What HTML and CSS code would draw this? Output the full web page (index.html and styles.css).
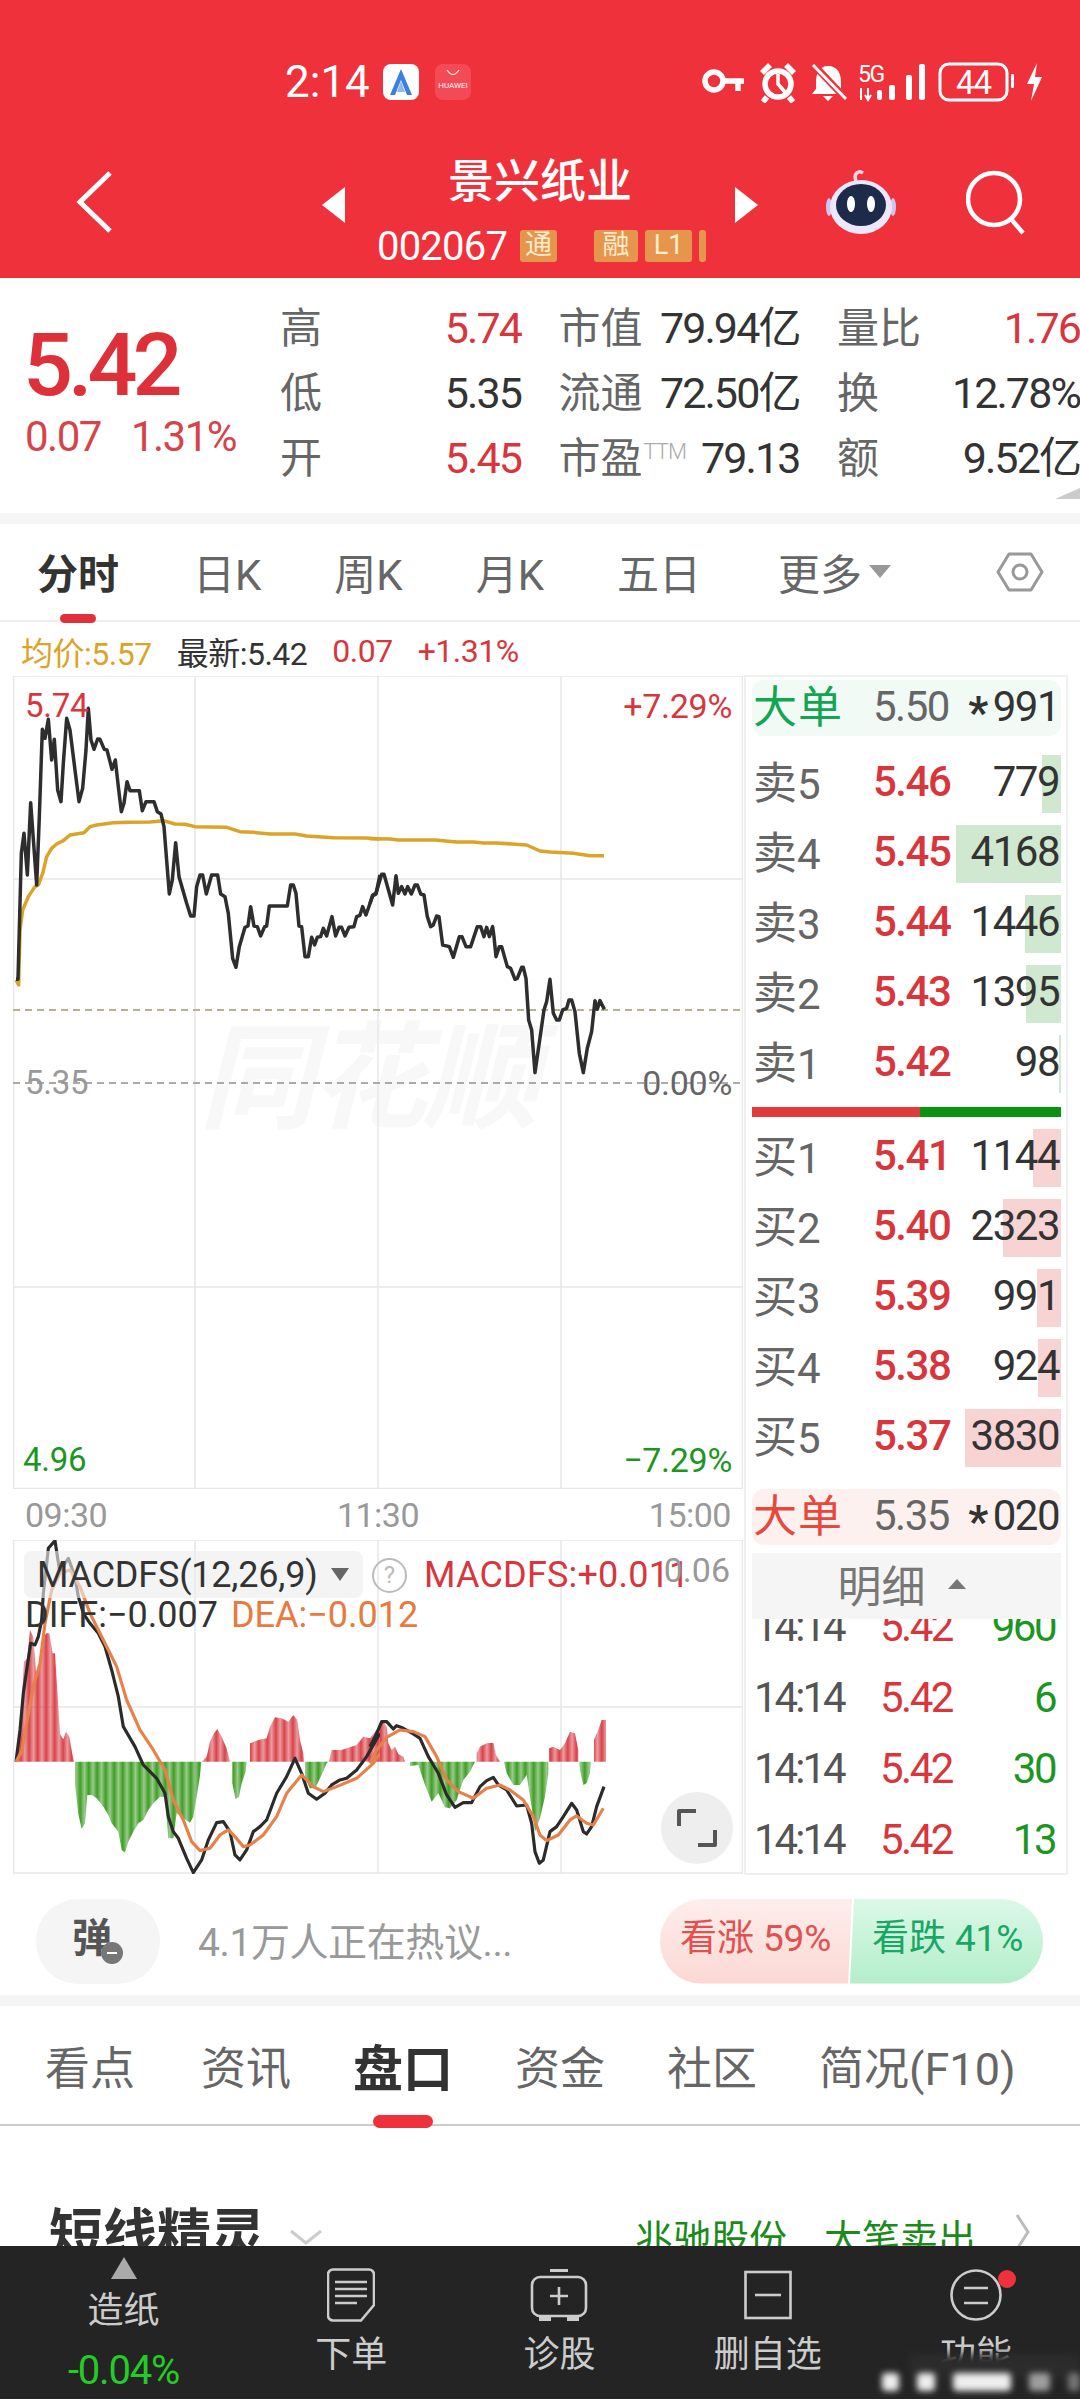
FILE: index.html
```html
<!doctype html>
<html lang="zh">
<head>
<meta charset="utf-8" />
<title>景兴纸业 002067</title>
<link rel="stylesheet" href="styles.css">
</head>
<body>
<div id="page">

<!-- Kopf -->
<header class="top">
  <div class="status">
    <span class="clock">2:14</span>
    <span class="app app-a"><svg width="36" height="36" viewBox="0 0 36 36"><path d="M18 5 L29 31 H24 L18 16 L12 31 H7Z" fill="#3d7fe0"/><path d="M18 17 L22 28 H14Z" fill="#8fb9f2"/></svg></span>
    <span class="app app-h"><svg width="36" height="12" viewBox="0 0 36 12"><path d="M12 1 Q18 10 24 1" fill="none" stroke="#fff" stroke-width="1.2"/></svg><b>HUAWEI</b></span>
    <svg class="sys" width="345" height="42" viewBox="700 58 345 42" fill="#fff" stroke="none">
      <g fill="none" stroke="#fff" stroke-width="5.5">
        <circle cx="714" cy="78" r="9"/><path d="M723 78 H744 M738 78 V88"/>
        <circle cx="778" cy="81" r="13"/><path d="M762 70 L770 62 M794 70 L786 62 M767 94 L763 99 M789 94 L793 99"/>
      </g>
      <path d="M778 71 V81 L785 89" fill="none" stroke="#fff" stroke-width="3.5"/>
      <path d="M828 63 c-9 0 -12 8 -12 16 v7 l-4 5 h33 l-4 -5 v-7 c0 -8 -3 -16 -13 -16z M823 93 h10 l-5 5z"/>
      <path d="M812 60 L848 98" stroke="#ef313b" stroke-width="7"/>
      <path d="M813 62 L846 96" stroke="#fff" stroke-width="3"/>
      <text x="858" y="79" font-size="23" letter-spacing="-1.5">5G</text>
      <path d="M861 85 V97 M868 85 V96 M865 92 L868 97 L871 92" fill="none" stroke="#fff" stroke-width="2"/>
      <rect x="877" y="87" width="5" height="10" rx="2"/><rect x="889" y="82" width="6" height="15" rx="2"/>
      <rect x="906" y="72" width="6" height="25" rx="2"/><rect x="919" y="61" width="6" height="36" rx="2"/>
      <rect x="940" y="61" width="67" height="36" rx="9" fill="none" stroke="#fff" stroke-width="3"/>
      <text x="973.5" y="91" font-size="33" text-anchor="middle" letter-spacing="-1">44</text>
      <rect x="1011" y="71" width="3" height="14" rx="1"/>
      <path d="M1037 60 L1027 81 H1034 L1031 98 L1042 74 H1035Z"/>
    </svg>
  </div>
  <nav class="bar">
    <svg class="back" width="37" height="62" viewBox="0 0 37 62"><path d="M34 2 L4 31 L34 60" fill="none" stroke="#fff" stroke-width="5"/></svg>
    <i class="tri-l"></i>
    <div class="name">
      <h1>景兴纸业</h1>
      <p class="code"><span>002067</span><b class="tag tag-tong">通</b><b class="tag tag-rong">融</b><b class="tag tag-l1">L1</b><b class="tag tag-cut"></b></p>
    </div>
    <i class="tri-r"></i>
    <svg class="robot" width="72" height="66" viewBox="0 0 72 66">
      <path d="M31 12 C28 4 34 1 38 4" fill="none" stroke="#efd5e4" stroke-width="3.5"/>
      <ellipse cx="4" cy="38" rx="3" ry="9" fill="#cfc6ee"/><ellipse cx="68" cy="38" rx="3" ry="9" fill="#cfc6ee"/>
      <ellipse cx="36" cy="38" rx="31" ry="27" fill="#ece8fb"/>
      <ellipse cx="36" cy="36" rx="25" ry="21" fill="#1d2a49"/>
      <ellipse cx="26" cy="35" rx="4" ry="8" fill="#fff"/><ellipse cx="46" cy="35" rx="4" ry="8" fill="#fff"/>
    </svg>
    <svg class="search" width="62" height="66" viewBox="0 0 62 66"><circle cx="28" cy="30" r="26" fill="none" stroke="#fff" stroke-width="4.5"/><path d="M45 50 L57 64" stroke="#fff" stroke-width="4.5"/></svg>
  </nav>
</header>

<!-- Kurs -->
<section class="quote">
  <div class="price">
    <div class="last">5.42</div>
    <div class="chg"><span>0.07</span><span>1.31%</span></div>
  </div>
  <div class="stats">
    <div class="cell"><label>高</label><b class="red">5.74</b></div>
    <div class="cell"><label>市值</label><b>79.94亿</b></div>
    <div class="cell"><label>量比</label><b class="red">1.76</b></div>
    <div class="cell"><label>低</label><b>5.35</b></div>
    <div class="cell"><label>流通</label><b>72.50亿</b></div>
    <div class="cell"><label>换</label><b>12.78%</b></div>
    <div class="cell"><label>开</label><b class="red">5.45</b></div>
    <div class="cell"><label>市盈<sup>TTM</sup></label><b>79.13</b></div>
    <div class="cell"><label>额</label><b>9.52亿</b></div>
  </div>
  <i class="corner"></i>
</section>
<div class="strip"></div>

<div class="tabs">
  <span class="on">分时</span><span>日K</span><span>周K</span><span>月K</span><span>五日</span><span class="more">更多<i></i></span>
  <svg class="hex" width="48" height="48" viewBox="0 0 48 48"><path d="M13 6 H35 L46 24 L35 42 H13 L2 24Z" fill="none" stroke="#999" stroke-width="3" stroke-linejoin="round"/><circle cx="24" cy="24" r="7" fill="none" stroke="#999" stroke-width="3"/></svg>
</div>

<div class="legend">
  <span class="gold">均价:5.57</span><span>最新:5.42</span><span class="red">0.07</span><span class="red">+1.31%</span>
</div>

<!-- Charts + Orderbuch -->
<div class="market">
  <div class="charts">
    <div class="chart">
      <span class="mark">同花顺</span>
      <svg width="730" height="813" viewBox="13 676 730 813" fill="none" stroke-linejoin="round">
        <path d="M13 676 H743 M13 879 H743 M13 1287 H743 M13 1488.5 H743 M13.5 676 V1489 M195 676 V1489 M378 676 V1489 M561 676 V1489 M742.5 676 V1489" stroke="#e8e8e8" stroke-width="1.6"/>
        <path d="M13 1010 H743" stroke="#b8b194" stroke-width="2" stroke-dasharray="7 5"/>
        <path d="M13 1083 H743" stroke="#aaa" stroke-width="2" stroke-dasharray="7 5"/>
        <g transform="translate(10 690) scale(.3333)" stroke-width="10.5">
          <path stroke="#dba328" d="M18 870 L26 885 L30 720 L38 660 L55 620 L75 590 L85 585 L98 550 L110 500 L125 475 L140 462 L160 452 L180 435 L222 428 L240 410 L260 405 L310 398 L350 397 L420 396 L460 392 L495 402 L525 403 L555 410 L650 412 L690 425 L730 427 L780 432 L855 432 L890 438 L970 443 L1070 444 L1110 447"/>
          <path stroke="#2e2e2e" d="M18 868 L24 868 L34 490 L42 430 L52 555 L62 338 L80 585 L88 380 L97 118 L105 145 L115 88 L125 210 L133 148 L143 300 L153 335 L160 220 L170 85 L180 120 L195 240 L207 335 L218 295 L228 180 L235 55 L243 150 L252 178 L263 147 L270 148 L283 178 L291 180 L306 238 L316 210 L325 290 L334 365 L342 340 L351 275 L360 302 L388 302 L397 362 L408 335 L432 335 L442 365 L453 372 L462 410 L478 612 L487 570 L497 458 L507 560 L530 640 L542 678 L552 678 L560 590 L570 555 L578 555 L589 612 L605 555 L623 555 L632 612 L645 620 L655 670 L668 805 L678 832 L688 770 L705 712 L714 708 L722 650 L732 708 L742 710 L752 738 L764 710 L770 708 L778 648 L832 648 L842 585 L850 585 L858 610 L867 708 L875 710 L885 800 L895 800 L905 742 L914 765 L922 742 L932 740 L940 715 L950 738 L966 680 L977 738 L987 712 L995 712 L1005 738 L1017 712 L1032 710 L1040 680 L1050 676 L1058 650 L1068 675 L1088 618 L1098 612 L1110 555"/>
        </g>
        <g transform="translate(370 690) scale(.3333)" stroke-width="10.5">
          <path stroke="#dba328" d="M0 446 L60 447 L85 450 L195 450 L260 456 L310 456 L340 459 L380 459 L470 465 L510 483 L540 486 L610 490 L660 497 L702 497"/>
          <path stroke="#2e2e2e" d="M0 640 L8 615 L18 610 L35 553 L42 553 L68 645 L78 557 L85 610 L95 590 L105 612 L113 590 L124 612 L135 585 L142 585 L152 612 L162 615 L172 680 L182 710 L190 705 L200 678 L207 680 L218 765 L238 770 L250 802 L268 740 L276 740 L288 770 L302 770 L322 710 L332 710 L342 740 L350 712 L358 740 L368 710 L372 740 L378 800 L388 770 L395 770 L412 830 L422 835 L435 868 L442 865 L455 832 L460 832 L468 865 L476 990 L485 1020 L495 1148 L522 960 L530 935 L540 868 L550 970 L560 990 L568 990 L578 960 L590 955 L597 930 L605 930 L615 965 L628 1090 L640 1148 L652 1075 L665 1025 L675 932 L682 958 L690 932 L703 958"/>
        </g>
      </svg>
      <span class="lb lb-hi red">5.74</span>
      <span class="lb lb-pct red">+7.29%</span>
      <span class="lb lb-pre">5.35</span>
      <span class="lb lb-zero">0.00%</span>
      <span class="lb lb-lo green">4.96</span>
      <span class="lb lb-neg green">−7.29%</span>
    </div>
    <div class="axis"><span>09:30</span><span>11:30</span><span>15:00</span></div>
    <div class="macd">
      <svg width="730" height="334" viewBox="13 1540 730 334" fill="none" stroke-linejoin="round">
        <defs>
          <pattern id="barR" width="3.4" height="6" patternUnits="userSpaceOnUse"><rect width="2.6" height="6" fill="#d9434a"/></pattern>
          <pattern id="barG" width="3.4" height="6" patternUnits="userSpaceOnUse"><rect width="2.6" height="6" fill="#3f9e25"/></pattern>
        </defs>
        <path d="M13 1540 H743 M13 1707 H743 M13 1873 H743 M13.5 1540 V1874 M195 1540 V1874 M378 1540 V1874 M561 1540 V1874 M742.5 1540 V1874" stroke="#e8e8e8" stroke-width="1.6"/>
        <g transform="translate(10 1530) scale(.3333)">
          <path fill="url(#barR)" d="M18 695 L25 670 L35 520 L42 395 L52 385 L60 300 L70 320 L78 425 L88 410 L98 330 L108 310 L118 310 L128 370 L135 370 L143 497 L150 612 L160 628 L168 605 L178 620 L187 672 L192 695Z M575 695 L590 680 L600 635 L612 610 L622 597 L635 620 L650 655 L660 695Z M720 695 L720 640 L745 630 L770 625 L780 590 L795 562 L815 565 L835 575 L850 555 L862 570 L870 630 L880 670 L882 695Z M957 695 L965 660 L995 660 L1040 645 L1060 620 L1080 625 L1100 600 L1110 590 L1110 695Z"/>
          <path fill="url(#barG)" d="M195 695 L195 762 L205 852 L215 897 L225 880 L232 795 L245 795 L260 805 L280 830 L295 855 L305 880 L325 905 L335 960 L345 968 L355 935 L370 905 L385 880 L400 870 L415 840 L430 820 L450 800 L465 800 L475 925 L490 925 L500 850 L520 865 L540 878 L550 860 L560 800 L570 738 L574 695Z M667 695 L667 760 L677 808 L687 800 L695 760 L707 725 L710 695Z M885 695 L885 745 L900 775 L915 775 L925 755 L935 735 L950 700 L955 695Z"/>
          <path stroke="#2b2b2b" stroke-width="9.5" d="M18 695 L30 600 L40 490 L50 420 L62 340 L75 345 L85 320 L95 270 L100 190 L108 120 L115 55 L135 32 L150 130 L165 100 L175 85 L195 140 L205 200 L220 250 L240 280 L265 310 L285 350 L305 420 L325 500 L340 590 L375 650 L400 705 L440 745 L465 790 L475 860 L490 905 L505 925 L530 985 L550 1028 L575 990 L595 930 L620 878 L640 875 L660 905 L675 975 L690 990 L710 960 L730 905 L750 890 L770 870 L800 790 L830 740 L855 685 L875 730 L895 790 L920 808 L945 790 L965 765 L990 750 L1010 745 L1040 720 L1070 680 L1110 610"/>
          <path stroke="#e8804a" stroke-width="9.5" d="M18 695 L35 665 L50 580 L70 470 L90 400 L105 280 L125 180 L150 130 L180 120 L210 170 L240 250 L280 330 L320 410 L350 510 L390 600 L430 660 L465 720 L490 810 L520 870 L545 935 L570 962 L600 955 L630 915 L655 900 L675 920 L700 950 L720 945 L760 915 L800 860 L830 790 L875 735 L910 770 L940 785 L980 770 L1040 745 L1090 700 L1110 670"/>
        </g>
        <g transform="translate(370 1530) scale(.3333)">
          <path fill="url(#barR)" d="M30 695 L30 585 L40 575 L50 590 L55 640 L65 660 L75 650 L85 672 L100 680 L105 695Z M320 695 L320 670 L330 650 L350 640 L370 638 L378 675 L390 695Z M537 695 L537 655 L550 650 L570 660 L585 640 L600 605 L615 610 L625 660 L625 695Z M672 695 L672 630 L685 600 L695 570 L708 570 L708 695Z"/>
          <path fill="url(#barG)" d="M120 695 L120 708 L145 705 L165 765 L185 815 L205 790 L225 832 L240 835 L260 810 L280 750 L300 725 L315 695Z M402 695 L410 730 L430 765 L450 765 L470 735 L480 800 L490 865 L495 905 L510 865 L525 800 L535 730 L535 695Z M628 695 L630 720 L640 765 L650 760 L660 730 L662 695Z"/>
          <path stroke="#2b2b2b" stroke-width="9.5" d="M0 650 L20 610 L35 575 L50 575 L70 597 L80 587 L100 595 L130 612 L150 625 L175 680 L205 730 L230 795 L255 832 L280 818 L305 818 L330 770 L350 752 L370 742 L385 765 L410 780 L440 828 L470 825 L485 880 L495 965 L508 1000 L520 990 L540 905 L560 890 L580 860 L605 820 L620 840 L640 905 L650 912 L665 890 L680 830 L702 770"/>
          <path stroke="#e8804a" stroke-width="9.5" d="M0 700 L20 660 L50 622 L90 600 L130 605 L165 620 L200 680 L230 750 L265 785 L310 805 L350 775 L390 765 L420 780 L460 810 L490 860 L510 915 L530 932 L565 915 L600 870 L620 858 L650 880 L670 885 L700 835"/>
        </g>
        <circle cx="697" cy="1828" r="36" fill="#eee"/>
        <path d="M679 1826 V1811 H696 M698 1845 H715 V1830" stroke="#555" stroke-width="4"/>
      </svg>
      <div class="pick"><span>MACDFS(12,26,9)</span><i></i></div>
      <span class="help">?</span>
      <span class="mv red">MACDFS:+0.011</span>
      <span class="mtop">0.06</span>
      <div class="mline"><span>DIFF:−0.007</span><span class="dea">DEA:−0.012</span></div>
    </div>
  </div>

  <aside class="book">
    <div class="big big-g"><em>大单</em><b>5.50</b><span><i class="star">*</i>991</span></div>
    <div class="rows">
      <div class="row"><label>卖<u>5</u></label><b>5.46</b><span>779</span><i class="ask" style="width:19px"></i></div>
      <div class="row"><label>卖<u>4</u></label><b>5.45</b><span>4168</span><i class="ask" style="width:105px"></i></div>
      <div class="row"><label>卖<u>3</u></label><b>5.44</b><span>1446</span><i class="ask" style="width:36px"></i></div>
      <div class="row"><label>卖<u>2</u></label><b>5.43</b><span>1395</span><i class="ask" style="width:35px"></i></div>
      <div class="row"><label>卖<u>1</u></label><b>5.42</b><span>98</span><i class="ask" style="width:2px"></i></div>
    </div>
    <div class="spread"><i></i></div>
    <div class="rows rows-buy">
      <div class="row"><label>买<u>1</u></label><b>5.41</b><span>1144</span><i class="bid" style="width:28px"></i></div>
      <div class="row"><label>买<u>2</u></label><b>5.40</b><span>2323</span><i class="bid" style="width:58px"></i></div>
      <div class="row"><label>买<u>3</u></label><b>5.39</b><span>991</span><i class="bid" style="width:24px"></i></div>
      <div class="row"><label>买<u>4</u></label><b>5.38</b><span>924</span><i class="bid" style="width:23px"></i></div>
      <div class="row"><label>买<u>5</u></label><b>5.37</b><span>3830</span><i class="bid" style="width:96px"></i></div>
    </div>
    <div class="big big-r"><em>大单</em><b>5.35</b><span><i class="star">*</i>020</span></div>
    <div class="detail">明细<i></i></div>
    <div class="ticks">
      <div class="tick"><span>14:14</span><b>5.42</b><em>960</em></div>
      <div class="tick"><span>14:14</span><b>5.42</b><em>6</em></div>
      <div class="tick"><span>14:14</span><b>5.42</b><em>30</em></div>
      <div class="tick"><span>14:14</span><b>5.42</b><em>13</em></div>
    </div>
  </aside>
</div>

<!-- Kommentar -->
<div class="talk">
  <div class="danmu"><b>弹</b><i></i></div>
  <span class="hot">4.1万人正在热议...</span>
  <div class="vote"><span class="up">看涨 59%</span><span class="down">看跌 41%</span></div>
</div>
<div class="strip"></div>

<div class="subtabs">
  <span>看点</span><span>资讯</span><span class="on">盘口</span><span>资金</span><span>社区</span><span>简况(F10)</span>
</div>

<div class="spirit">
  <h2>短线精灵</h2>
  <svg class="chev" width="34" height="16" viewBox="0 0 34 16"><path d="M2 2 L17 14 L32 2" fill="none" stroke="#ccc" stroke-width="3"/></svg>
  <span class="s-stock">兆驰股份</span><span class="s-act">大笔卖出</span>
  <svg class="chev-r" width="16" height="36" viewBox="0 0 16 36"><path d="M2 1 L13 18 L2 35" fill="none" stroke="#bbb" stroke-width="3"/></svg>
</div>

<!-- Fussleiste -->
<footer class="dock">
  <div class="dock-first"><i></i><span>造纸</span><b>-0.04%</b></div>
  <div class="dock-item">
    <svg width="48" height="54" viewBox="0 0 48 54" fill="none" stroke="#ccc" stroke-width="2.6"><path d="M6 1.5 H42 a5 5 0 0 1 5 5 V37 L34 52.5 H6 a5 5 0 0 1 -5 -5 V6.5 a5 5 0 0 1 5 -5Z"/><path d="M8 14 H40 M8 21 H40 M8 28 H40 M8 35 H30"/></svg>
    <span>下单</span>
  </div>
  <div class="dock-item">
    <svg width="58" height="54" viewBox="0 0 58 54" fill="none" stroke="#ccc" stroke-width="2.6"><path d="M20 2.5 H38" stroke-width="3"/><rect x="2" y="9" width="54" height="39" rx="8"/><path d="M29 19 V37 M20 28 H38"/><path d="M9 51 H21 M37 51 H49" stroke-width="4"/></svg>
    <span>诊股</span>
  </div>
  <div class="dock-item">
    <svg width="48" height="54" viewBox="0 0 48 54" fill="none" stroke="#ccc" stroke-width="2.6"><rect x="1.5" y="4" width="45" height="46"/><path d="M11 27 H37"/></svg>
    <span>删自选</span>
  </div>
  <div class="dock-item">
    <svg width="52" height="54" viewBox="0 0 52 54" fill="none" stroke="#ccc" stroke-width="2.6"><circle cx="26" cy="27" r="24.5"/><path d="M14 20 H38 M14 35 H38"/></svg>
    <span>功能</span>
    <i class="dot"></i>
  </div>
  <div class="smear"><i></i><i></i><i></i><i></i><i></i></div>
</footer>

</div>
</body>
</html>
```

FILE: styles.css
```css
* { box-sizing: border-box; }
html, body { margin: 0; padding: 0; background: #fff; }
body { font-family: Roboto, "Noto Sans CJK SC", sans-serif; color: #333; }
#page { position: relative; width: 1080px; height: 2400px; overflow: hidden; }
h1, h2, p { margin: 0; font-weight: 400; }
i, em { font-style: normal; }
u { text-decoration: none; }
label { font-weight: 400; }

.red { color: #d8363c; }
.green { color: #1b961f; }
.gold { color: #dba328; }

/* Kopf */
.top { height: 278px; background: #ef313b; color: #fff; padding-top: 61px; }
.status { display: flex; align-items: center; height: 42px; padding-left: 285px; }
.clock { font-size: 44px; width: 98px; line-height: 42px; }
.app { display: flex; flex-direction: column; align-items: center; width: 36px; height: 36px; border-radius: 8px; }
.app-a { background: #fff; }
.app-h { margin-left: 16px; background: #f34a55; padding-top: 5px; }
.app-h b { font-size: 8px; font-weight: 400; line-height: 10px; }
.sys { margin-left: 229px; font-family: Roboto, sans-serif; }

.bar { display: flex; align-items: center; height: 175px; padding: 0 0 0 76px; }
.back { margin-top: 22px; }
.tri-l, .tri-r { width: 0; height: 0; border-top: 18px solid transparent; border-bottom: 18px solid transparent; margin-top: 28px; }
.tri-l { margin-left: 209px; border-right: 23px solid #fff; }
.tri-r { border-left: 23px solid #fff; }
.name { width: 390px; display: flex; flex-direction: column; align-items: center; padding-top: 36px; }
.name h1 { font-size: 46px; line-height: 60px; font-weight: 500; }
.code { display: flex; align-items: center; height: 40px; margin-top: 15px; margin-left: 4px; font-size: 40px; width: 330px; }
.code span { width: 143px; letter-spacing: -.8px; }
.tag { display: block; height: 32px; line-height: 31px; text-align: center; font-size: 27px; font-weight: 400; background: #e6964c; color: #ffeccd; border-radius: 3px; }
.tag-tong { width: 37px; }
.tag-rong { width: 44px; margin-left: 37px; }
.tag-l1 { width: 47px; margin-left: 7px; }
.tag-cut { width: 7px; margin-left: 7px; }
.robot { margin-left: 67px; margin-top: 22px; }
.search { margin-left: 69px; margin-top: 22px; }

/* Kurs */
.quote { position: relative; display: flex; height: 235px; }
.price { width: 281px; padding: 40px 0 0 23px; color: #de3038; }
.last { font-size: 88px; line-height: 94px; font-weight: 500; letter-spacing: -5px; }
.chg { display: flex; gap: 30px; margin-left: 2px; font-size: 42px; line-height: 50px; letter-spacing: -1.5px; color: #d5444b; }
.stats { display: grid; grid-template-columns: 240px 240px 242px; column-gap: 38.5px; grid-auto-rows: 65px; padding-top: 17px; }
.cell { display: flex; justify-content: space-between; align-items: center; font-size: 43px; letter-spacing: -1.9px; }
.cell label { color: #666; letter-spacing: 0; font-size: 42px; margin: -6px 0 0 -1px; }
.cell b { font-weight: 400; line-height: 50px; color: #333; }
.cell b.red { color: #d8363c; }
.cell sup { font-size: 22px; line-height: 0; vertical-align: 14px; color: #aaa; font-weight: 300; letter-spacing: -1px; margin-left: 1px; }
.corner { position: absolute; right: 0; top: 210px; width: 0; height: 0; border-bottom: 11px solid #ccc; border-left: 25px solid transparent; }
.strip { height: 11px; background: #f5f5f5; }

.tabs { display: flex; align-items: center; position: relative; height: 98px; padding: 0 0 0 37px; gap: 73px; border-bottom: 2px solid #eee; color: #666; font-size: 42px; }
.tabs span { position: relative; padding-bottom: 2px; }
.tabs .on { color: #333; font-weight: 700; font-size: 41px; margin-right: 1px; }
.tabs .on:after { content: ''; position: absolute; left: 23px; bottom: -20px; width: 36px; height: 9px; border-radius: 5px; background: #e0313a; }
.tabs .more { margin-left: 4px; display: flex; align-items: center; }
.tabs .more i { width: 0; height: 0; margin-left: 7px; border-top: 13px solid #999; border-left: 11px solid transparent; border-right: 11px solid transparent; }
.hex { position: absolute; left: 996px; top: 24px; }

.legend { display: flex; gap: 25px; align-items: center; height: 53px; padding: 4px 0 0 21px; font-size: 32px; letter-spacing: -.5px; }

/* Charts */
.market { display: flex; height: 1200px; padding-left: 13px; }
.charts { width: 730px; }
.chart { position: relative; height: 814px; padding-top: 1px; overflow: hidden; }
.chart svg { position: relative; display: block; }
.macd svg { display: block; }
.mark { position: absolute; left: 186px; top: 344px; font-size: 116px; line-height: 120px; letter-spacing: -4px; font-weight: 700; font-style: italic; color: #f8f8f8; }
.lb { position: absolute; font-size: 34px; line-height: 40px; letter-spacing: -.3px; }
.lb-hi { left: 12px; top: 11px; font-size: 33px; }
.lb-pct { right: 11px; top: 11px; }
.lb-pre { left: 12px; top: 388px; font-size: 33px; color: #999; }
.lb-zero { right: 11px; top: 388px; color: #666; }
.lb-lo { left: 10px; top: 765px; font-size: 33px; }
.lb-neg { right: 11px; top: 765px; }
.axis { display: flex; justify-content: space-between; align-items: center; height: 51px; padding: 0 12px; font-size: 34px; color: #999; letter-spacing: -.5px; }
.macd { position: relative; height: 334px; }
.pick { position: absolute; left: 11px; top: 11px; display: flex; align-items: center; width: 339px; height: 47px; padding-left: 13px; border-radius: 8px; background: rgba(238,238,238,.62); font-size: 36px; color: #333; letter-spacing: -.2px; }
.pick i { width: 0; height: 0; margin-left: 13px; border-top: 13px solid #666; border-left: 9px solid transparent; border-right: 9px solid transparent; }
.help { position: absolute; left: 359px; top: 18px; width: 35px; height: 35px; border: 2.5px solid #bbb; border-radius: 50%; text-align: center; line-height: 30px; font-size: 24px; color: #bbb; }
.mv { position: absolute; left: 411px; top: 13px; font-size: 36px; line-height: 44px; letter-spacing: .2px; }
.mtop { position: absolute; right: 13px; top: 10px; font-size: 34px; line-height: 40px; color: #999; }
.mline { position: absolute; left: 12px; top: 53px; display: flex; gap: 13px; font-size: 36px; line-height: 44px; }
.mline .dea { color: #e87a3f; }

/* Orderbuch */
.book { width: 324px; margin-left: 1px; padding: 3px 5px 0 6px; border: 2px solid #f0f0f0; font-size: 42px; letter-spacing: -1.5px; overflow: hidden; }
.big { display: flex; align-items: center; height: 56px; border-radius: 12px; padding-bottom: 4px; }
.big em { width: 121px; padding-bottom: 4px; padding-left: 1px; font-size: 44px; letter-spacing: 1px; }
.big b { width: 80px; font-weight: 400; color: #666; }
.big span { flex: 1; text-align: right; padding-right: 2px; color: #333; }
.star { position: relative; top: 7px; font-weight: 700; font-size: 44px; margin-right: 6px; }
.big-g { background: #f1faf5; }
.big-g em { color: #12a552; }
.big-r { background: #fdf1f0; margin-top: 16px; }
.big-r em { color: #e8473c; }
.rows { margin-top: 13px; }
.rows-buy { margin-top: 6px; }
.row { position: relative; display: flex; align-items: center; height: 70px; padding-bottom: 5px; }
.row label { width: 121px; padding-left: 1px; padding-bottom: 3px; color: #666; font-size: 44px; letter-spacing: 0; }
.row label u { font-size: 42px; }
.row b { position: relative; z-index: 1; width: 80px; font-weight: 500; color: #d8363c; }
.row span { position: relative; z-index: 1; flex: 1; text-align: right; padding-right: 2px; color: #333; }
.row i { position: absolute; right: 0; top: 6px; height: 58px; }
.ask { background: #cfe8cf; }
.bid { background: #f8d3d3; }
.spread { height: 10px; margin-top: 8px; background: #0a930f; }
.spread i { display: block; width: 168px; height: 10px; background: #e03a3a; }
.detail { display: flex; align-items: center; justify-content: center; height: 66px; margin-top: 8px; padding: 0 10px 5px 0; background: #f5f5f5; color: #777; font-size: 44px; letter-spacing: 0; }
.detail i { width: 0; height: 0; margin-left: 22px; border-bottom: 10px solid #777; border-left: 9px solid transparent; border-right: 9px solid transparent; }
.ticks { height: 254px; overflow: hidden; }
.tick { display: flex; align-items: center; height: 71px; margin-left: 2px; margin-right: 4px; letter-spacing: -2.5px; }
.tick:first-child { margin-top: -28px; }
.tick span { width: 126px; color: #555; letter-spacing: -3px; }
.tick b { width: 80px; font-weight: 400; color: #d8363c; }
.tick em { flex: 1; text-align: right; color: #1b961f; padding-right: 2px; }

/* Kommentar */
.talk { display: flex; align-items: center; height: 120px; padding: 12px 0 0 36px; }
.danmu { position: relative; width: 124px; height: 85px; border-radius: 42px; background: #f5f5f5; padding-left: 36px; font-size: 40px; line-height: 80px; color: #555; }
.danmu b { font-weight: 700; }
.danmu i { position: absolute; left: 65px; top: 43px; width: 22px; height: 22px; border-radius: 50%; background: #777; }
.danmu i:after { content: ''; position: absolute; left: 6px; top: 10px; width: 10px; height: 2px; background: #fff; }
.hot { margin-left: 38px; width: 462px; padding-bottom: 4px; font-size: 39px; color: #999; letter-spacing: -.4px; }
.vote { display: flex; width: 383px; height: 85px; font-size: 37px; line-height: 80px; letter-spacing: -.1px; }
.vote span { display: block; height: 85px; }
.up { width: 192px; padding-left: 20px; border-radius: 42px 0 0 42px; color: #e25050; background: linear-gradient(#fdeeec, #fbd8d3); clip-path: polygon(0 0, 100% 0, 98% 100%, 0 100%); }
.down { width: 193px; margin-left: -2px; padding-left: 22px; border-radius: 0 42px 42px 0; color: #18a765; background: linear-gradient(#dcf8e7, #b3eecb); clip-path: polygon(4px 0, 100% 0, 100% 100%, 0 100%); }

.subtabs { display: flex; align-items: center; gap: 62px; height: 120px; padding: 0 0 0 45px; border-bottom: 2px solid #ccc; font-size: 45px; color: #666; }
.subtabs span:first-child { margin-right: 4px; }
.subtabs .on { position: relative; font-size: 50px; font-weight: 700; color: #333; }
.subtabs .on:after { content: ''; position: absolute; left: 20px; bottom: -27px; width: 60px; height: 13px; border-radius: 7px; background: #ef313b; }
.spirit { position: relative; height: 120px; overflow: hidden; }
.spirit h2 { position: absolute; left: 49px; top: 80px; font-size: 54px; line-height: 60px; font-weight: 700; color: #333; }
.chev { position: absolute; left: 289px; top: 103px; }
.s-stock, .s-act { position: absolute; top: 88px; font-size: 38px; line-height: 50px; color: #1b8a1b; }
.s-stock { left: 635px; }
.s-act { left: 824px; }
.chev-r { position: absolute; left: 1015px; top: 88px; }

/* Fussleiste */
.dock { position: relative; display: flex; height: 153px; background: #242424; color: #ccc; font-size: 36px; }
.dock-first { display: flex; flex-direction: column; align-items: center; width: 248px; padding-top: 11px; }
.dock-first i { width: 0; height: 0; border-bottom: 22px solid #aaa; border-left: 13px solid transparent; border-right: 13px solid transparent; }
.dock-first span { line-height: 40px; margin-top: 12px; }
.dock-first b { font-weight: 400; font-size: 40px; line-height: 40px; margin-top: 20px; color: #25cc25; letter-spacing: -1.2px; }
.dock-item { position: relative; display: flex; flex-direction: column; align-items: center; width: 209px; padding-top: 22px; }
.dock-item svg { display: block; }
.dock-item span { line-height: 40px; margin-top: 13px; }
.dot { position: absolute; left: 126px; top: 24px; width: 18px; height: 18px; border-radius: 50%; background: #ef313b; }
.smear { position: absolute; left: 870px; top: 110px; width: 210px; height: 43px; display: flex; gap: 18px; align-items: flex-end; padding: 0 0 8px 12px; }
.smear:before { content: ''; position: absolute; left: 40px; top: -2px; width: 170px; height: 24px; background: #2c2c2c; filter: blur(4px); }
.smear i { position: relative; width: 18px; height: 18px; background: #eee; filter: blur(3px); border-radius: 4px; }
.smear i:nth-child(3) { width: 60px; }
.smear i:nth-child(4) { width: 22px; opacity: .6; }
.smear i:nth-child(5) { width: 12px; opacity: .4; }
```
